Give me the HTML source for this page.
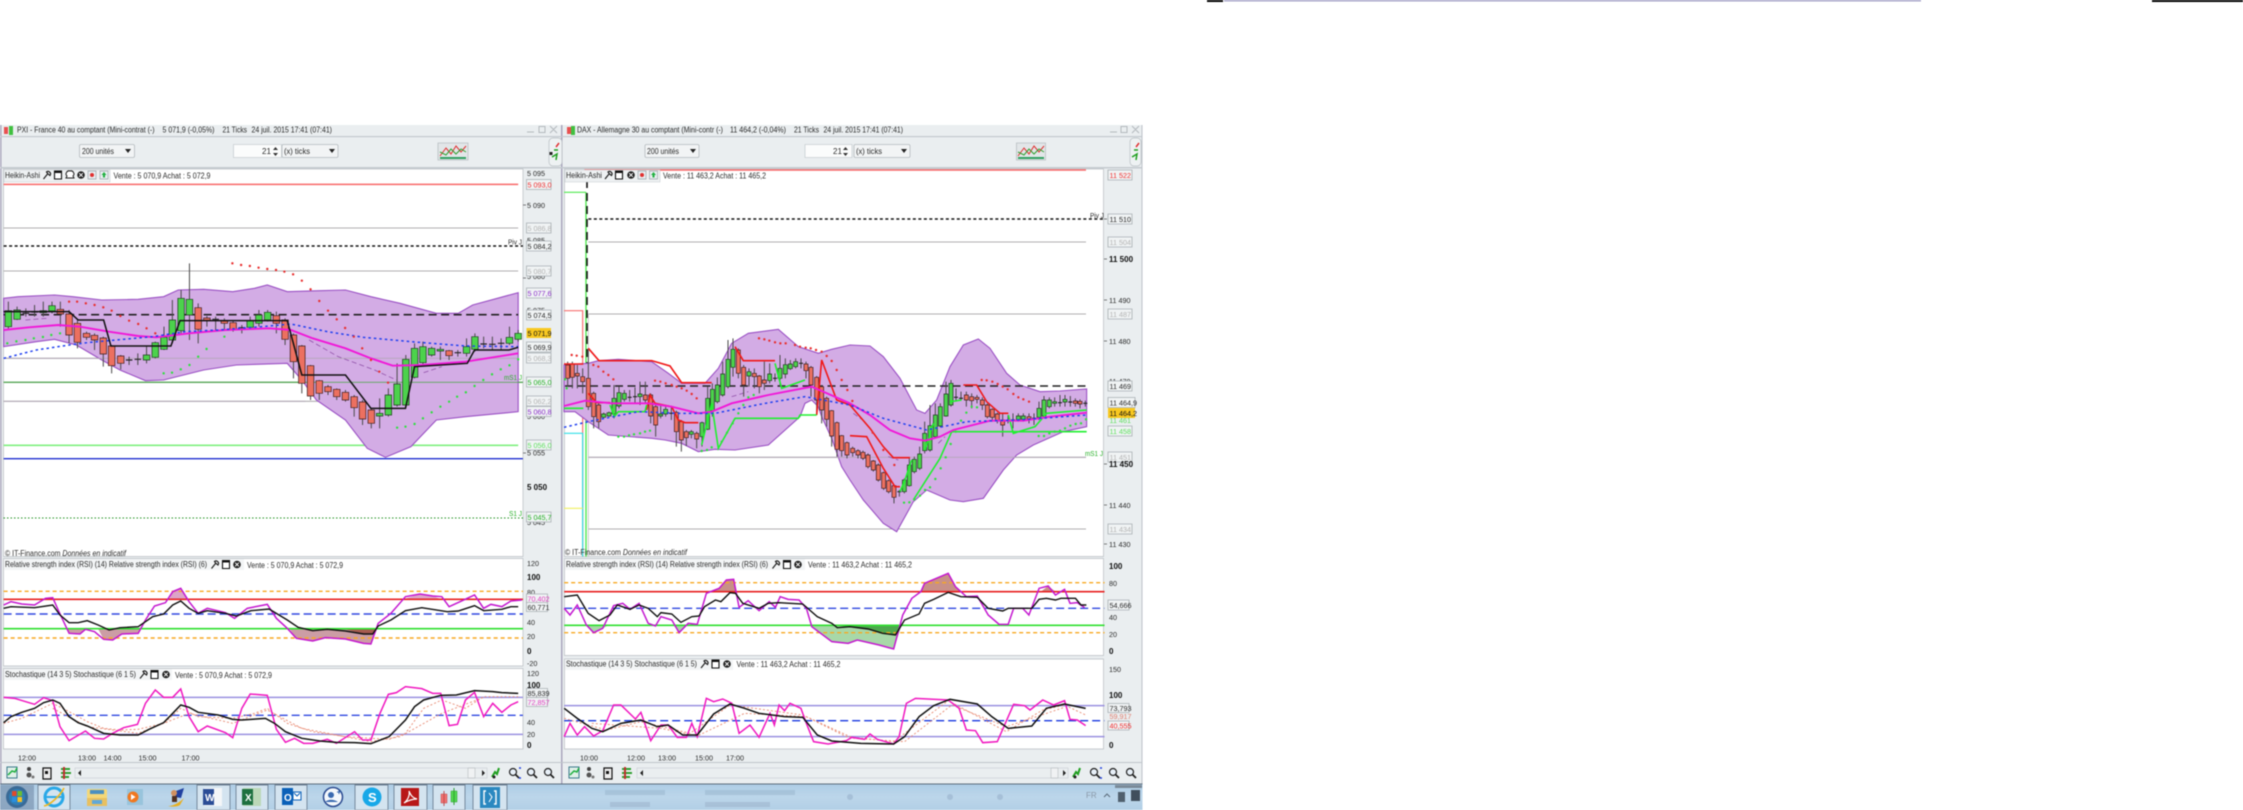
<!DOCTYPE html>
<html><head><meta charset="utf-8"><title>Charts</title>
<style>
html,body{margin:0;padding:0;background:#fff;width:2243px;height:810px;overflow:hidden}
svg{display:block;position:absolute;left:0;top:0;filter:blur(.45px)}
svg path,svg line,svg rect,svg circle,svg polygon{vector-effect:non-scaling-stroke}
text{font-family:"Liberation Sans",sans-serif;font-size:8px;fill:#2c2c2c}
.ax text{font-size:7.2px}
.ax .b{font-weight:bold;fill:#111;font-size:8px}
.g{fill:#b4b4b4}.r{fill:#f03030}.p{fill:#8a2fc8}.gr{fill:#28b028}.lg{fill:#60e060}.m{fill:#e040c0}
.box{fill:#f0f3f4;stroke:#a8aeb2;stroke-width:.8}
.n{fill:none}
</style></head><body>
<svg width="2243" height="810" viewBox="0 0 2243 810" xmlns="http://www.w3.org/2000/svg">
<defs>
<g id="wr"><path d="M-3 4L1-1M0-3a2.5 2.5 0 0 1 3.500 3.500L1.500-1Z" fill="none" stroke="#222" stroke-width="1.200"/></g>
<g id="wn"><rect x="-3.500" y="-4" width="7" height="8" fill="#fff" stroke="#111" stroke-width="1.100"/><rect x="-3.500" y="-4" width="7" height="2" fill="#111"/></g>
<g id="xc"><circle r="3.800" fill="#222"/><path d="M-1.800-1.800L1.800 1.800M1.800-1.800L-1.800 1.800" stroke="#fff" stroke-width="1"/></g>
<g id="ch"><rect x="-4" y="-4" width="8" height="8" fill="#e8eef0" stroke="#9aa4aa" stroke-width=".7"/><circle r="2" fill="#e03030"/></g>
<g id="cg"><rect x="-4" y="-4" width="8" height="8" fill="#e8eef0" stroke="#9aa4aa" stroke-width=".7"/><path d="M-2.500 0L0-3 2.500 0H1V2.500H-1V0Z" fill="#20b040"/></g>
<g id="srch"><circle cx="-1" cy="-1" r="3.500" fill="#e8f0f8" stroke="#222" stroke-width="1.200"/><path d="M1.500 1.500L5 5" stroke="#222" stroke-width="1.800"/></g>
</defs>

<!-- top strip -->
<rect x="1207" y="0" width="16" height="2" fill="#000"/>
<rect x="1224" y="0" width="697" height="1.500" fill="#a7a4c9"/>
<rect x="2152" y="0" width="91" height="2" fill="#000"/>

<!-- window backgrounds -->
<rect x="0" y="125" width="562" height="660" fill="#eaeef0"/>
<rect x="562.500" y="125" width="580" height="660" fill="#eaeef0"/>
<rect x="0" y="125" width="1.500" height="660" fill="#a9a6bd"/>
<rect x="561" y="125" width="1.500" height="660" fill="#a9a6bd"/>
<rect x="1141.500" y="125" width="1" height="660" fill="#bcc2c8"/>
<rect x="0" y="136" width="1142" height="1.200" fill="#c4cacf"/>
<rect x="0" y="167" width="1142" height="1.500" fill="#c4cacf"/>

<!-- panels chart 1 -->
<rect x="3.500" y="169" width="519.500" height="387.500" fill="#fff" stroke="#b8bdc1" stroke-width=".7"/>
<rect x="3.500" y="558.500" width="519.500" height="107.500" fill="#fff" stroke="#b8bdc1" stroke-width=".7"/>
<rect x="3.500" y="668.500" width="519.500" height="80.500" fill="#fff" stroke="#b8bdc1" stroke-width=".7"/>
<!-- panels chart 2 -->
<rect x="564.500" y="169" width="539" height="387.500" fill="#fff" stroke="#b8bdc1" stroke-width=".7"/>
<rect x="564.500" y="558.500" width="539" height="97" fill="#fff" stroke="#b8bdc1" stroke-width=".7"/>
<rect x="564.500" y="659" width="539" height="90" fill="#fff" stroke="#b8bdc1" stroke-width=".7"/>
<rect x="0" y="762" width="1142" height="1" fill="#bfc5ca"/>

<!-- chart 1 price -->
<g transform="translate(0,100) scale(.36364,.33333)">
<path d="M10 253H1425" stroke="#f86868" stroke-width="1.500" fill="none"/>
<path d="M10 384H1425M10 513H1425M10 775H1425M10 904H1425" stroke="#b0aeb0" stroke-width="1.100" fill="none"/>
<path d="M10 847H1438" stroke="#5aa85a" stroke-width="1.300" fill="none"/>
<path d="M10 1036H1425" stroke="#80f080" stroke-width="1.600" fill="none"/>
<path d="M10 1076H1438" stroke="#2030d0" stroke-width="1.400" fill="none"/>
<path d="M10 438H1438" stroke="#111" stroke-width="1.500" stroke-dasharray="3 2.500" fill="none"/>
<path d="M10 595L50 590 150 585 200 590 280 600 380 598 450 590 490 570 560 568 640 575 700 565 735 555 790 575 880 572 950 570 1020 590 1100 610 1200 640 1260 640 1300 615 1425 578V935L1280 950 1200 960 1130 1040 1060 1072 1010 1045 950 960 870 900 830 840 790 790 650 795 560 810 450 840 400 842 330 810 280 780 210 735 150 718 100 725 10 740Z" fill="#d3ace5" stroke="#9a50c4" stroke-width="1.100"/>
<path d="M10 644H1425" stroke="#222" stroke-width="1.600" stroke-dasharray="8 4.500" fill="none"/>
<path d="M10 775H1425M10 904H840" stroke="#b4a8b8" stroke-width=".8" fill="none"/>
<path d="M10 847H1438" stroke="#5aa85a" stroke-width=".9" fill="none"/>
<path d="M850 720L930 770 1030 810 1090 840M1165 818L1215 800M70 660L130 655" stroke="#9050a8" stroke-width=".8" stroke-dasharray="5 3" fill="none"/>
<!-- wicks -->
<path d="M23 605V690M47 620V660M71 625V650M95 615V650M119 605V650M143 605V640M166 605V680M190 630V730M213 660V745M238 695V720M260 700V750M284 710V800M307 735V820M332 765V808M355 770V795M379 760V795M403 740V790M427 725V775M451 680V750M474 600V730M498 570V700M521 490V720M545 610V730M569 648V680M593 650V690M617 655V690M641 660V695M665 675V700M688 650V690M712 630V680M736 630V665M760 635V700M784 655V735M807 700V835M830 735V880M854 795V900M878 840V900M902 855V885M926 865V900M950 870V905M974 885V950M997 900V975M1021 925V985M1044 895V985M1068 865V950M1092 790V920M1116 765V920M1140 730V835M1163 725V795M1187 740V770M1211 740V780M1235 750V780M1259 750V770M1283 715V770M1306 700V755M1330 710V745M1354 710V750M1378 715V750M1401 680V735M1425 690V725" stroke="#4a4a4a" stroke-width="1" fill="none"/>
<path d="M14 632h18v48h-18zM38 630h18v28h-18zM110 632h18v6h-18zM134 617h18v16h-18zM394 765h18v15h-18zM418 728h18v44h-18zM442 712h18v36h-18zM465 660h18v60h-18zM489 595h18v97h-18zM512 598h18v47h-18zM679 662h18v20h-18zM703 645h18v25h-18zM727 637h18v23h-18zM1035 940h18v8h-18zM1059 885h18v60h-18zM1083 852h18v63h-18zM1107 778h18v137h-18zM1131 745h18v87h-18zM1154 740h18v48h-18zM1178 745h18v20h-18zM1202 748h18v5h-18zM1274 740h18v20h-18zM1297 710h18v38h-18zM1392 712h18v18h-18zM1416 700h18v18h-18z" fill="#4cd24c" stroke="#1c3c1c" stroke-width=".7"/>
<path d="M157 628h18v14h-18zM181 642h18v63h-18zM204 670h18v57h-18zM229 700h18v12h-18zM251 706h18v14h-18zM275 714h18v48h-18zM298 738h18v59h-18zM323 768h18v22h-18zM536 623h18v65h-18zM560 654h18v8h-18zM608 663h18v7h-18zM632 668h18v22h-18zM751 647h18v23h-18zM775 660h18v58h-18zM798 705h18v80h-18zM821 738h18v112h-18zM845 797h18v91h-18zM869 842h18v38h-18zM893 860h18v15h-18zM917 868h18v22h-18zM941 877h18v23h-18zM965 890h18v33h-18zM988 906h18v51h-18zM1012 930h18v40h-18zM1226 752h18v15h-18z" fill="#ec7060" stroke="#3c1c1c" stroke-width=".7"/>
<path d="M62 640h18M86 636h18M346 780h18M370 778h18M584 658h18M656 683h18M1250 758h18M1321 732h18M1345 733h18M1369 730h18" stroke="#222" stroke-width="1.200" fill="none"/>
<!-- lines -->
<path d="M10 690L80 682 160 675 220 680 300 695 380 708 430 712 520 700 620 690 740 685 800 690 860 715 950 745 1020 775 1080 797 1160 795 1280 785 1425 760" stroke="#f018d8" stroke-width="1.900" fill="none"/>
<path d="M10 775L100 750 190 735 240 728 320 720 420 710 510 695 600 690 720 680 800 672 900 695 1000 712 1130 725 1280 738 1425 740" stroke="#2040f0" stroke-width="1.500" stroke-dasharray="2.500 3" fill="none"/>
<path d="M10 635H190L215 660H285L305 738H470L495 662H790L830 825H950L1020 925H1115L1140 800 1285 790 1305 750H1400L1425 742" stroke="#111" stroke-width="1.500" fill="none"/>
<path d="M190 605h.1M212 605h.1M236 610h.1M260 615h.1M284 622h.1M307 632h.1M331 648h.1M355 662h.1M380 672h.1M403 685h.1M427 700h.1M639 490h.1M663 495h.1M687 498h.1M711 503h.1M735 507h.1M759 510h.1M782 515h.1M806 523h.1M830 542h.1M854 568h.1M878 603h.1M902 632h.1M926 658h.1M949 684h.1M973 710h.1M996 745h.1M1020 780h.1M1043 815h.1M1067 848h.1" stroke="#e83030" stroke-width="2.400" stroke-linecap="round" fill="none"/>
<path d="M20 730h.1M45 724h.1M70 720h.1M93 715h.1M118 711h.1M141 705h.1M165 700h.1M450 820h.1M473 818h.1M497 808h.1M521 795h.1M545 770h.1M568 747h.1M617 710h.1M1092 983h.1M1115 980h.1M1140 972h.1M1163 955h.1M1187 937h.1M1211 920h.1M1235 905h.1M1257 890h.1M1281 877h.1M1305 858h.1M1329 840h.1M1353 823h.1M1377 808h.1M1401 796h.1M1425 778h.1" stroke="#30e040" stroke-width="2.400" stroke-linecap="round" fill="none"/>
</g>
<path d="M3.500 518H523" stroke="#209020" stroke-width="1" stroke-dasharray="1.500 2" fill="none"/>

<!-- chart 1 RSI + Stoch -->
<g transform="translate(0,460) scale(.36364,.33333)">
<path d="M465 418L475 395 497 385 515 418ZM1115 415L1155 402 1190 408 1215 418Z" fill="#dca4c8"/>
<path d="M185 507L190 520 220 522 235 508ZM270 507L285 538 310 540 335 522 380 520 385 507ZM795 505L815 535 860 543 895 533 950 537 1000 550 1020 552 1035 507Z" fill="#cc9da5"/>
<path d="M950 508L1000 522 1025 522 1035 508Z" fill="#a85a50"/>
<path d="M10 394H1438M10 534H1438" stroke="#f8a820" stroke-width="1.400" stroke-dasharray="4 3" fill="none"/>
<path d="M10 418H1438" stroke="#e82020" stroke-width="1.600" fill="none"/>
<path d="M10 462H1438" stroke="#3048e0" stroke-width="1.400" stroke-dasharray="8 4" fill="none"/>
<path d="M10 506H1438" stroke="#30e030" stroke-width="1.600" fill="none"/>
<path d="M10 435L30 425 60 432 95 435 125 415 145 413 160 450 190 520 220 522 235 508 260 515 285 538 310 540 335 522 380 520 400 480 425 438 455 428 475 395 497 385 520 425 545 460 570 445 620 458 645 475 680 445 735 433 760 475 790 505 815 535 860 543 895 533 950 537 1000 550 1020 552 1040 490 1075 460 1115 410 1155 402 1190 408 1215 410 1235 440 1265 425 1305 405 1330 445 1350 433 1380 440 1405 423 1435 420" stroke="#c418d0" stroke-width="1.500" fill="none"/>
<path d="M10 445L30 440 95 443 145 435 165 465 190 488 215 488 240 482 270 495 300 510 330 503 380 500 420 470 450 462 475 435 497 423 520 445 545 460 570 452 620 460 650 468 690 452 740 447 790 480 820 502 860 512 900 508 950 513 1000 522 1025 522 1040 498 1075 480 1115 452 1160 443 1230 455 1260 453 1305 437 1330 452 1380 448 1405 440 1425 440" stroke="#111" stroke-width="1.400" fill="none"/>
<path d="M10 712H1438M10 823H1438" stroke="#9a90e0" stroke-width="1.500" fill="none"/>
<path d="M10 766H1438" stroke="#3048e0" stroke-width="1.400" stroke-dasharray="8 4" fill="none"/>
<path d="M10 790L60 775 145 730 190 755 240 785 285 805 330 810 380 808 450 790 497 745 545 770 640 775 700 760 735 745 790 790 860 815 950 830 1020 835 1070 838 1115 820 1165 745 1215 720 1280 745 1330 710 1425 710M145 745L240 800 380 820 520 760 640 790 735 750 830 805 1020 845 1100 830 1215 760 1330 712" stroke="#e88870" stroke-width=".9" stroke-dasharray="2 2" fill="none"/>
<path d="M10 712L40 715 95 733 120 713 145 722 165 800 190 842 235 813 260 835 285 837 310 820 340 803 378 793 400 730 427 690 450 712 475 712 497 687 520 770 545 815 570 798 620 818 640 833 665 745 688 702 735 706 760 808 785 847 810 835 835 850 860 850 900 838 925 850 975 815 997 840 1020 840 1045 760 1068 703 1090 698 1115 680 1160 686 1190 700 1212 700 1235 797 1258 793 1280 720 1305 697 1330 770 1355 730 1380 757 1405 735 1425 725" stroke="#f018c0" stroke-width="1.500" fill="none"/>
<path d="M10 788L30 770 60 757 95 745 120 728 145 720 165 730 190 770 215 788 240 798 285 820 330 825 380 825 410 808 450 788 475 760 497 735 520 742 545 757 600 765 640 778 665 780 730 775 755 790 785 815 830 835 880 843 925 847 975 848 1020 851 1070 830 1115 780 1140 740 1165 720 1212 706 1255 705 1305 692 1355 695 1380 698 1425 700" stroke="#111" stroke-width="1.500" fill="none"/>
</g>

<!-- chart 2 price: origin 555,290, 3x -->
<g transform="translate(555,290) scale(.33333)">
<path d="M88 -360H1593" stroke="#f86868" stroke-width="1.600" fill="none"/>
<path d="M100 -144H1593M100 72H1593M100 502H1593M100 717H1593" stroke="#b0aeb0" stroke-width="1.100" fill="none"/>
<path d="M93 -293V800" stroke="#50e850" stroke-width="1.400" fill="none"/>
<path d="M27 -293H93" stroke="#50e850" stroke-width="1.200" fill="none"/>
<path d="M27 62H83V800" stroke="#f87070" stroke-width="1.200" fill="none"/>
<path d="M27 430H83V800" stroke="#30e0e8" stroke-width="1.200" fill="none"/>
<path d="M27 655H83" stroke="#f0f060" stroke-width="1.200" fill="none"/>
<path d="M100 72V800" stroke="#c0c0c0" stroke-width=".8" fill="none"/>
<path d="M96 -330V360" stroke="#111" stroke-width="1.600" stroke-dasharray="8 5" fill="none"/>
<path d="M100 -213H1648" stroke="#111" stroke-width="1.500" stroke-dasharray="3 2.500" fill="none"/>
<path d="M27 225L100 220 130 212 190 208 290 215 340 250 380 280 450 280 490 235 530 160 580 130 670 118 730 170 790 190 830 178 885 165 945 168 985 200 1035 265 1085 360 1110 370 1145 330 1185 230 1225 165 1270 147 1305 175 1355 250 1395 285 1455 305 1515 303 1595 297V410L1525 425 1435 465 1385 495 1345 540 1285 625 1225 635 1185 630 1115 600 1075 635 1025 725 985 700 925 630 885 570 860 530 830 445 800 380 790 350 770 330 750 340 735 380 640 465 540 480 480 478 430 485 380 460 330 450 290 445 160 435 130 415 100 395 60 365 27 365Z" fill="#d3ace5" stroke="#9a50c4" stroke-width="1.100"/>
<path d="M30 288H1593" stroke="#222" stroke-width="1.600" stroke-dasharray="8 4.500" fill="none"/>
<path d="M100 502H1593" stroke="#b4a8b8" stroke-width=".8" fill="none"/>
<path d="M895 370L930 395M1000 500L1030 510M530 320L580 305M1150 460L1170 440" stroke="#9050a8" stroke-width=".8" stroke-dasharray="5 3" fill="none"/>
<!-- wicks -->
<path d="M38 215V290M52 215V295M67 225V295M83 235V310M100 175V360M116 305V415M131 340V415M146 368V385M162 365V380M177 285V385M192 290V355M208 300V335M224 300V335M240 292V340M255 275V345M271 275V340M287 310V400M302 345V440M317 345V385M332 350V380M349 350V390M364 362V470M379 390V485M394 420V468M409 420V445M425 425V475M441 395V470M458 290V420M472 280V380M487 262V340M503 215V320M519 150V295M534 145V260M550 175V265M566 225V320M582 235V290M598 235V295M613 255V310M628 215V300M644 220V280M660 250V275M675 195V285M691 205V265M706 210V240M722 205V235M738 205V235M753 215V265M768 228V320M785 258V375M800 285V400M815 320V410M830 360V470M846 395V500M860 435V500M876 455V505M893 470V500M909 478V505M924 482V510M939 490V535M955 510V545M970 520V575M986 545V600M1001 568V610M1017 585V640M1033 600V620M1048 565V610M1063 505V590M1078 500V550M1094 470V540M1109 395V490M1125 345V485M1141 340V445M1156 340V412M1173 275V380M1188 270V350M1203 295V335M1218 305V330M1234 305V350M1250 310V355M1266 315V340M1282 322V360M1297 340V385M1312 355V395M1327 368V400M1343 370V440M1359 375V400M1374 370V415M1390 370V395M1405 370V395M1422 370V400M1437 370V405M1452 335V390M1467 318V385M1483 322V355M1499 322V350M1515 315V350M1530 315V350M1546 318V350M1561 325V350M1575 328V355M1591 332V350" stroke="#4a4a4a" stroke-width="1" fill="none"/>
<path d="M140 372h12v10h-12zM156 368h12v10h-12zM171 325h12v47h-12zM186 308h12v40h-12zM202 310h12v18h-12zM249 312h12v8h-12zM311 372h12v6h-12zM326 358h12v14h-12zM403 425h12v8h-12zM435 398h12v42h-12zM452 325h12v93h-12zM466 298h12v64h-12zM481 285h12v50h-12zM497 252h12v63h-12zM513 208h12v82h-12zM528 178h12v54h-12zM576 245h12v13h-12zM638 252h12v20h-12zM669 235h12v30h-12zM685 224h12v28h-12zM700 222h12v14h-12zM716 215h12v15h-12zM1042 570h12v35h-12zM1057 525h12v62h-12zM1072 508h12v37h-12zM1088 492h12v43h-12zM1103 430h12v52h-12zM1119 407h12v73h-12zM1135 375h12v65h-12zM1150 350h12v58h-12zM1167 312h12v66h-12zM1182 280h12v65h-12zM1384 378h12v12h-12zM1399 378h12v10h-12zM1446 355h12v27h-12zM1461 330h12v48h-12zM1477 330h12v20h-12zM1493 335h12v5h-12zM1524 328h12v8h-12z" fill="#4cd24c" stroke="#1c3c1c" stroke-width=".7"/>
<path d="M32 225h12v40h-12zM46 222h12v40h-12zM61 250h12v8h-12zM77 260h12v15h-12zM94 265h12v85h-12zM110 310h12v70h-12zM125 345h12v50h-12zM265 315h12v15h-12zM281 315h12v63h-12zM296 350h12v55h-12zM358 367h12v58h-12zM373 395h12v55h-12zM388 425h12v18h-12zM419 430h12v17h-12zM544 180h12v70h-12zM560 232h12v53h-12zM592 250h12v10h-12zM607 258h12v32h-12zM622 270h12v10h-12zM747 222h12v20h-12zM762 232h12v53h-12zM779 262h12v68h-12zM794 290h12v70h-12zM809 325h12v63h-12zM824 362h12v76h-12zM840 398h12v80h-12zM854 437h12v45h-12zM870 458h12v37h-12zM887 475h12v13h-12zM903 482h12v13h-12zM918 487h12v18h-12zM933 495h12v35h-12zM949 513h12v27h-12zM964 525h12v45h-12zM980 548h12v47h-12zM995 572h12v33h-12zM1011 587h12v35h-12zM1228 315h12v15h-12zM1244 320h12v12h-12zM1260 322h12v6h-12zM1276 330h12v15h-12zM1291 345h12v35h-12zM1306 358h12v24h-12zM1321 372h12v20h-12zM1337 390h12v15h-12zM1416 380h12v8h-12zM1555 333h12v7h-12zM1569 334h12v8h-12z" fill="#ec7060" stroke="#3c1c1c" stroke-width=".7"/>
<path d="M218 322h12M234 320h12M343 370h12M654 265h12M732 220h12M1027 605h12M1197 322h12M1212 325h12M1353 392h12M1368 390h12M1431 385h12M1509 338h12M1540 336h12M1585 340h12" stroke="#222" stroke-width="1.200" fill="none"/>
<!-- red -->
<path d="M27 222H85M100 175L132 212H290L345 228 380 278H470M100 310L125 338H165M275 360L285 315 300 340 350 350 370 390 390 398H430M540 170L565 212H660M785 375L800 210 845 330 885 345 945 415 985 470 1015 503H1065M885 437L935 440 985 535 1020 590H1035M1225 285H1265L1295 335 1335 370H1360" stroke="#f01818" stroke-width="1.600" fill="none"/>
<!-- green -->
<path d="M27 355H85M165 345L178 380 190 365H270L275 345M440 465L470 340 490 475 540 385H730L735 375H785M660 220L680 295 750 270M1075 630L1155 505 1190 425H1595M1035 605L1050 570 1070 510M1110 480L1135 400M1185 335L1220 330M1360 375L1375 430 1440 410 1475 370 1595 360" stroke="#20f030" stroke-width="1.600" fill="none"/>
<!-- magenta -->
<path d="M27 348L90 332 170 340 280 340 350 350 430 370 470 365 530 340 640 315 770 290 885 340 945 375 1005 420 1065 445 1110 452 1155 440 1195 420 1305 392 1405 392 1485 380 1595 368" stroke="#f018d8" stroke-width="1.900" fill="none"/>
<path d="M27 412L100 395 250 365 370 370 480 370 630 340 750 320 885 345 985 385 1115 420 1235 395 1385 390 1595 375" stroke="#2040f0" stroke-width="1.500" stroke-dasharray="2.500 3" fill="none"/>
<path d="M50 195h.1M65 197h.1M82 200h.1M115 225h.1M130 230h.1M145 245h.1M160 255h.1M175 268h.1M300 272h.1M316 275h.1M332 280h.1M350 285h.1M365 290h.1M380 295h.1M395 302h.1M410 312h.1M425 325h.1M612 145h.1M628 148h.1M643 152h.1M660 157h.1M676 160h.1M692 160h.1M720 165h.1M735 170h.1M752 173h.1M767 175h.1M783 180h.1M800 185h.1M815 198h.1M830 213h.1M845 240h.1M860 270h.1M877 300h.1M892 333h.1M953 428h.1M985 480h.1M1018 525h.1M1280 270h.1M1295 271h.1M1312 275h.1M1328 282h.1M1343 290h.1M1358 298h.1M1375 312h.1M1390 322h.1M1405 328h.1M1422 335h.1" stroke="#e83030" stroke-width="2.400" stroke-linecap="round" fill="none"/>
<path d="M30 268h.1M35 295h.1M190 440h.1M207 440h.1M222 436h.1M237 433h.1M255 430h.1M270 425h.1M285 422h.1M440 483h.1M456 480h.1M470 472h.1M500 455h.1M516 428h.1M533 400h.1M550 370h.1M565 345h.1M580 322h.1M596 315h.1M1047 638h.1M1063 637h.1M1078 628h.1M1095 617h.1M1110 600h.1M1125 592h.1M1141 567h.1M1157 535h.1M1172 502h.1M1187 462h.1M1202 425h.1M1218 392h.1M1234 368h.1M1250 350h.1M1266 352h.1M1451 438h.1M1467 438h.1M1483 430h.1M1499 425h.1M1515 422h.1M1530 415h.1M1546 407h.1M1562 402h.1M1578 400h.1M1593 388h.1" stroke="#30e040" stroke-width="2.400" stroke-linecap="round" fill="none"/>
</g>

<!-- chart 2 RSI + Stoch -->
<g transform="translate(570,460) scale(.36364,.33333)">
<path d="M660 496L680 515 720 545 765 550 790 540 850 555 890 567 912 496ZM45 496L65 518 90 505 105 496ZM285 496L300 518 320 496Z" fill="#a8d8a8"/>
<path d="M735 497H910L895 525 860 520 820 507Z" fill="#4da84d"/>
<path d="M380 395L410 385 430 360 450 358 458 395ZM965 395L975 370 1040 340 1060 380 1075 395ZM1295 395L1315 378 1335 395Z" fill="#c89088"/>
<path d="M-16 368H1470M-16 518H1470" stroke="#f8a820" stroke-width="1.400" stroke-dasharray="4 3" fill="none"/>
<path d="M-16 395H1470" stroke="#e82020" stroke-width="1.600" fill="none"/>
<path d="M-16 445H1470" stroke="#3048e0" stroke-width="1.400" stroke-dasharray="8 4" fill="none"/>
<path d="M-16 496H1470" stroke="#30e030" stroke-width="1.600" fill="none"/>
<path d="M-16 445L0 465 20 435 45 495 65 518 90 505 120 437 145 430 165 448 190 430 215 490 235 498 250 470 280 480 300 518 325 490 350 493 375 400 410 385 430 360 450 358 465 442 490 422 520 452 548 425 565 442 578 410 600 418 630 420 650 445 665 500 720 545 765 550 790 540 850 555 890 567 915 465 940 415 965 395 975 370 1040 340 1060 380 1090 410 1120 408 1150 465 1180 493 1205 493 1220 445 1245 445 1262 465 1290 385 1315 378 1335 405 1360 388 1375 430 1395 428 1415 443" stroke="#c418d0" stroke-width="1.500" fill="none"/>
<path d="M-16 410L20 405 50 460 80 482 110 465 130 435 165 448 190 435 215 445 240 470 250 458 280 462 305 487 335 470 355 468 370 440 400 420 415 425 440 398 455 400 475 430 520 445 545 430 575 428 640 432 680 470 720 490 735 503 770 500 820 507 860 520 895 525 920 480 960 462 975 430 1000 418 1040 397 1075 410 1120 412 1150 445 1190 453 1205 445 1270 445 1290 418 1310 415 1335 420 1350 415 1390 415 1405 435 1420 435" stroke="#111" stroke-width="1.400" fill="none"/>
<path d="M-16 737H1470M-16 830H1470" stroke="#9a90e0" stroke-width="1.500" fill="none"/>
<path d="M-16 782H1470" stroke="#1838e0" stroke-width="1.400" stroke-dasharray="8 4" fill="none"/>
<path d="M-16 775L100 810 195 785 330 820 440 735 640 765 760 830 890 845 1040 722 1200 815 1300 750 1360 735 1418 765M60 790L250 805 350 828 480 760 650 770 780 835 920 845 1050 735 1200 800 1360 742" stroke="#e88870" stroke-width=".9" stroke-dasharray="2 2" fill="none"/>
<path d="M-16 830L0 790 20 825 40 800 65 828 90 812 120 735 140 735 180 777 195 757 222 842 250 795 270 795 295 832 320 832 335 790 350 830 375 715 395 725 420 717 445 730 465 820 495 795 520 832 550 760 562 795 575 735 590 752 605 730 635 745 650 790 670 845 710 852 760 842 775 832 810 838 825 822 845 838 890 852 905 830 925 730 950 715 1040 720 1070 745 1090 810 1115 812 1135 848 1175 845 1220 733 1250 737 1265 750 1300 720 1330 735 1360 722 1375 778 1395 780 1418 797" stroke="#f018c0" stroke-width="1.500" fill="none"/>
<path d="M-16 745L20 775 60 805 90 815 140 790 195 780 240 800 270 795 310 825 350 825 395 762 440 732 480 745 520 760 590 770 640 772 680 825 720 843 800 850 890 852 920 830 960 770 1000 737 1045 718 1120 732 1160 770 1205 805 1270 798 1310 745 1360 732 1418 745" stroke="#111" stroke-width="1.500" fill="none"/>
</g>

<!-- Title bars -->
<rect x="4" y="127" width="4" height="7" fill="#e85050"/><rect x="9" y="126" width="4" height="9" fill="#40c040"/>
<text x="17" y="132.500" textLength="137.500" lengthAdjust="spacingAndGlyphs">PXI - France 40 au comptant (Mini-contrat (-)</text>
<text x="162.500" y="132.500" textLength="52" lengthAdjust="spacingAndGlyphs">5 071,9 (-0,05%)</text>
<text x="222.500" y="132.500" textLength="24.500" lengthAdjust="spacingAndGlyphs">21 Ticks</text>
<text x="251.500" y="132.500" textLength="80.500" lengthAdjust="spacingAndGlyphs">24 juil. 2015 17:41 (07:41)</text>
<rect x="567" y="127" width="4" height="7" fill="#e85050"/><rect x="571" y="126" width="4" height="9" fill="#40c040"/>
<text x="577" y="132.500" textLength="146" lengthAdjust="spacingAndGlyphs">DAX - Allemagne 30 au comptant (Mini-contr (-)</text>
<text x="730" y="132.500" textLength="56" lengthAdjust="spacingAndGlyphs">11 464,2 (-0,04%)</text>
<text x="794" y="132.500" textLength="25" lengthAdjust="spacingAndGlyphs">21 Ticks</text>
<text x="823.500" y="132.500" textLength="79.500" lengthAdjust="spacingAndGlyphs">24 juil. 2015 17:41 (07:41)</text>
<path d="M527 132h7M539 126.500h6v6h-6zM550 126l7 7m0-7l-7 7M1110 132h7M1121 126.500h6v6h-6zM1132 126l7 7m0-7l-7 7" stroke="#b4b9bd" stroke-width="1" fill="none"/>

<!-- Toolbars chart 1 -->
<rect x="79.500" y="144.500" width="55" height="13" rx="1.500" fill="#f2f4f5" stroke="#b4babe" stroke-width=".8"/>
<text x="82" y="154" textLength="32" lengthAdjust="spacingAndGlyphs">200 unités</text><path d="M125 149h6l-3 4z" fill="#222"/>
<rect x="233.500" y="144.500" width="48" height="13" fill="#fbfcfc" stroke="#c8ced2" stroke-width=".8"/>
<text x="262" y="154">21</text><path d="M273 150l2.500-3 2.500 3zM273 153l2.500 3 2.500-3z" fill="#333"/>
<rect x="282" y="144.500" width="56" height="13" rx="1.500" fill="#f2f4f5" stroke="#b4babe" stroke-width=".8"/>
<text x="284" y="154" textLength="26" lengthAdjust="spacingAndGlyphs">(x) ticks</text><path d="M329 149h6l-3 4z" fill="#222"/>
<rect x="438" y="143" width="30" height="17" fill="#e2e6e8" stroke="#b8bec2" stroke-width=".8"/>
<path d="M440 156l6-8 5 6 5-8 5 6 5-6" stroke="#e03030" fill="none" stroke-width="1"/><path d="M440 152l6 3 5-6 5 5 5-5 5 3" stroke="#30a030" fill="none" stroke-width="1"/><rect x="440" y="157" width="26" height="2" fill="#30a060"/>
<rect x="549" y="138" width="13" height="28" rx="4" fill="#eef2f3" stroke="#b8bec2" stroke-width=".7"/>
<path d="M554 150h4M552 157l5-3-1 6" stroke="#20a020" stroke-width="1.500" fill="none"/><path d="M556 147l3-4" stroke="#e03030" stroke-width="1.500"/><rect x="549.500" y="152" width="3" height="3" fill="#222"/>

<!-- Toolbars chart 2 -->
<rect x="645" y="144.500" width="54" height="13" rx="1.500" fill="#f2f4f5" stroke="#b4babe" stroke-width=".8"/>
<text x="647" y="154" textLength="32" lengthAdjust="spacingAndGlyphs">200 unités</text><path d="M690 149h6l-3 4z" fill="#222"/>
<rect x="805" y="144.500" width="47" height="13" fill="#fbfcfc" stroke="#c8ced2" stroke-width=".8"/>
<text x="833" y="154">21</text><path d="M843 150l2.500-3 2.500 3zM843 153l2.500 3 2.500-3z" fill="#333"/>
<rect x="854" y="144.500" width="56" height="13" rx="1.500" fill="#f2f4f5" stroke="#b4babe" stroke-width=".8"/>
<text x="856" y="154" textLength="26" lengthAdjust="spacingAndGlyphs">(x) ticks</text><path d="M901 149h6l-3 4z" fill="#222"/>
<rect x="1016.500" y="143" width="29" height="17" fill="#e2e6e8" stroke="#b8bec2" stroke-width=".8"/>
<path d="M1018 156l6-8 5 6 5-8 5 6 5-6" stroke="#e03030" fill="none" stroke-width="1"/><path d="M1018 152l6 3 5-6 5 5 5-5 5 3" stroke="#30a030" fill="none" stroke-width="1"/><rect x="1018" y="157" width="26" height="2" fill="#30a060"/>
<rect x="1130" y="138" width="11" height="28" rx="4" fill="#eef2f3" stroke="#b8bec2" stroke-width=".7"/>
<path d="M1134 150h4M1132 157l5-3-1 6" stroke="#20a020" stroke-width="1.500" fill="none"/><path d="M1136 147l3-4" stroke="#e03030" stroke-width="1.500"/>

<!-- Panel headers chart 1 -->
<rect x="4" y="170" width="106" height="12" fill="#eef1f2" stroke="#c8ced2" stroke-width=".6"/>
<text x="5" y="178" textLength="35" lengthAdjust="spacingAndGlyphs">Heikin-Ashi</text>
<use href="#wr" x="46.500" y="175"/><use href="#wn" x="58" y="175"/><path d="M70 171a3 3 0 0 1 3 5l1 2h-8l1-2a3 3 0 0 1 3-5z" fill="#fff" stroke="#222"/><use href="#xc" x="81" y="175"/><use href="#ch" x="92" y="175"/><use href="#cg" x="104" y="175"/>
<text x="113.500" y="178.500" textLength="97" lengthAdjust="spacingAndGlyphs">Vente : 5 070,9 Achat : 5 072,9</text>
<rect x="4" y="559" width="240" height="11" fill="#eef1f2" opacity=".7"/>
<text x="5" y="567" textLength="202" lengthAdjust="spacingAndGlyphs">Relative strength index (RSI) (14) Relative strength index (RSI) (6)</text>
<use href="#wr" x="214.500" y="564.500"/><use href="#wn" x="226" y="564.500"/><use href="#xc" x="237" y="564.500"/>
<text x="247" y="568" textLength="96" lengthAdjust="spacingAndGlyphs">Vente : 5 070,9 Achat : 5 072,9</text>
<rect x="4" y="669" width="168" height="11" fill="#eef1f2" opacity=".7"/>
<text x="5" y="677" textLength="131" lengthAdjust="spacingAndGlyphs">Stochastique (14 3 5) Stochastique (6 1 5)</text>
<use href="#wr" x="143" y="674.500"/><use href="#wn" x="154.500" y="674.500"/><use href="#xc" x="166" y="674.500"/>
<text x="175" y="678" textLength="97" lengthAdjust="spacingAndGlyphs">Vente : 5 070,9 Achat : 5 072,9</text>
<text x="5" y="556" textLength="121" lengthAdjust="spacingAndGlyphs">© IT-Finance.com  <tspan font-style="italic">Données en indicatif</tspan></text>

<!-- Panel headers chart 2 -->
<rect x="565" y="170" width="95" height="12" fill="#eef1f2" stroke="#c8ced2" stroke-width=".6"/>
<text x="566" y="178" textLength="36" lengthAdjust="spacingAndGlyphs">Heikin-Ashi</text>
<use href="#wr" x="608" y="175"/><use href="#wn" x="619" y="175"/><use href="#xc" x="631" y="175"/><use href="#ch" x="642" y="175"/><use href="#cg" x="653.500" y="175"/>
<text x="663" y="178.500" textLength="103" lengthAdjust="spacingAndGlyphs">Vente : 11 463,2 Achat : 11 465,2</text>
<rect x="565" y="559" width="240" height="11" fill="#eef1f2" opacity=".7"/>
<text x="566" y="567" textLength="202" lengthAdjust="spacingAndGlyphs">Relative strength index (RSI) (14) Relative strength index (RSI) (6)</text>
<use href="#wr" x="775.500" y="564.500"/><use href="#wn" x="787" y="564.500"/><use href="#xc" x="798" y="564.500"/>
<text x="808" y="567.500" textLength="104" lengthAdjust="spacingAndGlyphs">Vente : 11 463,2 Achat : 11 465,2</text>
<rect x="565" y="660" width="168" height="10" fill="#eef1f2" opacity=".7"/>
<text x="566" y="666.500" textLength="131" lengthAdjust="spacingAndGlyphs">Stochastique (14 3 5) Stochastique (6 1 5)</text>
<use href="#wr" x="704" y="664"/><use href="#wn" x="715.500" y="664"/><use href="#xc" x="727" y="664"/>
<text x="736.500" y="667" textLength="104" lengthAdjust="spacingAndGlyphs">Vente : 11 463,2 Achat : 11 465,2</text>
<text x="565" y="555" textLength="122" lengthAdjust="spacingAndGlyphs">© IT-Finance.com  <tspan font-style="italic">Données en indicatif</tspan></text>

<!-- Pivot labels -->
<g class="ax">
<text x="508" y="244.500" textLength="14" lengthAdjust="spacingAndGlyphs">Piv J</text>
<text x="504" y="380" class="gr" textLength="18" lengthAdjust="spacingAndGlyphs">mS1 J</text>
<text x="509" y="516" class="gr" textLength="13" lengthAdjust="spacingAndGlyphs">S1 J</text>
<text x="1090" y="218" textLength="14" lengthAdjust="spacingAndGlyphs">Piv J</text>
<text x="1085" y="456" class="gr" textLength="18" lengthAdjust="spacingAndGlyphs">mS1 J</text>
</g>

<!-- Axis chart 1 -->
<g class="ax">
<text x="527" y="176">5 095</text>
<rect class="box" x="526.500" y="179.500" width="24.500" height="10"/><text class="r" x="527.500" y="187.500">5 093,0</text>
<text x="527" y="208">5 090</text>
<rect class="box" x="526.500" y="223" width="24.500" height="10"/><text class="g" x="527.500" y="231">5 086,8</text>
<text x="527" y="243">5 085</text>
<rect class="box" x="526.500" y="241" width="24.500" height="10"/><text x="527.500" y="249">5 084,2</text>
<text x="527" y="279">5 080</text>
<rect class="box" x="526.500" y="266" width="24.500" height="10"/><text class="g" x="527.500" y="274">5 080,7</text>
<rect class="box" x="526.500" y="288" width="24.500" height="10"/><text class="p" x="527.500" y="296">5 077,6</text>
<text x="527" y="313">5 075</text>
<rect class="box" x="526.500" y="310" width="24.500" height="10"/><text x="527.500" y="318">5 074,5</text>
<rect x="526.500" y="328" width="24.500" height="10" fill="#f8c820"/><text x="527.500" y="336" style="fill:#111">5 071,9</text>
<rect class="box" x="526.500" y="342" width="24.500" height="10"/><text x="527.500" y="350">5 069,9</text>
<rect class="box" x="526.500" y="353" width="24.500" height="10"/><text class="g" x="527.500" y="361">5 068,3</text>
<rect class="box" x="526.500" y="377" width="24.500" height="10"/><text class="gr" x="527.500" y="385">5 065,0</text>
<rect class="box" x="526.500" y="396" width="24.500" height="10"/><text class="g" x="527.500" y="404">5 062,2</text>
<text x="527" y="419">5 060</text>
<rect class="box" x="526.500" y="406.500" width="24.500" height="10"/><text class="p" x="527.500" y="414.500">5 060,8</text>
<rect class="box" x="526.500" y="440" width="24.500" height="10"/><text class="lg" x="527.500" y="448">5 056,0</text>
<text x="527" y="455.500">5 055</text>
<text class="b" x="527" y="490">5 050</text>
<text x="527" y="525">5 045</text>
<rect class="box" x="526.500" y="512" width="24.500" height="10"/><text class="gr" x="527.500" y="520">5 045,7</text>
<text x="527" y="566">120</text><text class="b" x="527" y="580">100</text><text x="527" y="595">80</text>
<rect class="box" x="526.500" y="594" width="21" height="9"/><text class="m" x="527.500" y="601.500">70,402</text>
<rect class="box" x="526.500" y="602.500" width="21" height="9"/><text x="527.500" y="610">60,771</text>
<text x="527" y="625">40</text><text x="527" y="639">20</text><text class="b" x="527" y="654">0</text><text x="527" y="666">-20</text>
<text x="527" y="676">120</text><text class="b" x="527" y="688">100</text>
<rect class="box" x="526.500" y="688.500" width="21" height="9"/><text x="527.500" y="696">85,839</text>
<rect class="box" x="526.500" y="697.500" width="21" height="9"/><text class="m" x="527.500" y="705">72,857</text>
<text x="527" y="725">40</text><text x="527" y="737">20</text><text class="b" x="527" y="748">0</text>
<text x="18" y="760.500">12:00</text><text x="78" y="760.500">13:00</text><text x="103.500" y="760.500">14:00</text><text x="138.500" y="760.500">15:00</text><text x="181.500" y="760.500">17:00</text>
</g>

<!-- Axis chart 2 -->
<g class="ax">
<rect class="box" x="1108" y="170" width="24" height="10"/><text class="r" x="1109.500" y="178">11 522</text>
<rect class="box" x="1108" y="214" width="24" height="10"/><text x="1109.500" y="222">11 510</text>
<rect class="box" x="1108" y="237" width="24" height="10"/><text class="g" x="1109.500" y="245">11 504</text>
<text class="b" x="1109" y="262">11 500</text>
<text x="1109" y="303">11 490</text>
<rect class="box" x="1108" y="309" width="24" height="10"/><text class="g" x="1109.500" y="317">11 487</text>
<text x="1109" y="344">11 480</text>
<text x="1109" y="384">11 470</text>
<rect class="box" x="1108" y="381" width="24" height="10"/><text x="1109.500" y="389">11 469</text>
<rect class="box" x="1108" y="397.500" width="27" height="10"/><text x="1109.500" y="405.500">11 464,9</text>
<rect x="1108" y="408" width="27" height="10" fill="#f8c820"/><text x="1109.500" y="416" style="fill:#111">11 464,2</text>
<text class="lg" x="1109.500" y="423">11 461</text>
<rect class="box" x="1108" y="426" width="24" height="10"/><text class="lg" x="1109.500" y="434">11 458</text>
<rect class="box" x="1108" y="452" width="24" height="10"/><text class="g" x="1109.500" y="460">11 451</text>
<text class="b" x="1109" y="467">11 450</text>
<text x="1109" y="508">11 440</text>
<rect class="box" x="1108" y="524" width="24" height="10"/><text class="g" x="1109.500" y="532">11 434</text>
<text x="1109" y="547">11 430</text>
<text class="b" x="1109" y="569">100</text><text x="1109" y="586">80</text>
<rect class="box" x="1108" y="600" width="21" height="10"/><text x="1109.500" y="608">54,666</text>
<text x="1109" y="620">40</text><text x="1109" y="637">20</text><text class="b" x="1109" y="654">0</text>
<text x="1109" y="672">150</text><text class="b" x="1109" y="698">100</text>
<rect class="box" x="1108" y="703.500" width="21" height="9"/><text x="1109.500" y="711">73,793</text>
<text class="r" x="1109.500" y="719" style="fill:#e08070">59,917</text>
<rect class="box" x="1108" y="721" width="21" height="9"/><text class="r" x="1109.500" y="728.500">40,555</text>
<text class="b" x="1109" y="748">0</text>
<text x="580" y="760.500">10:00</text><text x="627" y="760.500">12:00</text><text x="658" y="760.500">13:00</text><text x="695" y="760.500">15:00</text><text x="726" y="760.500">17:00</text>
</g>
<path d="M523 205h3M523 278h3M523 453h3M1104 219h3M1104 259h3M1104 300h3M1104 341h3M1104 464h3M1104 505h3M1104 544h3" stroke="#555" stroke-width=".7"/>

<!-- bottom toolbars -->
<rect x="75" y="768" width="412" height="10" fill="#eaeef0" stroke="#cdd2d6" stroke-width=".7"/>
<rect x="637" y="768" width="431" height="10" fill="#eaeef0" stroke="#cdd2d6" stroke-width=".7"/>
<path d="M78 773l3-3v6zM485 773l-3-3v6zM640 773l3-3v6zM1066 773l-3-3v6z" fill="#222"/>
<rect x="468" y="768" width="7" height="10" fill="#f0f2f3" stroke="#aab0b4" stroke-width=".5"/>
<rect x="1051" y="768" width="7" height="10" fill="#f0f2f3" stroke="#aab0b4" stroke-width=".5"/>
<g>
<rect x="7" y="767" width="10" height="11" fill="#e0f0e8" stroke="#3a7a8a"/><path d="M8 775l4-4 3 1 2-4" stroke="#20b040" stroke-width="1.500" fill="none"/>
<circle cx="29" cy="769" r="2" fill="#444"/><circle cx="29" cy="775" r="2.500" fill="#555"/><circle cx="33" cy="777" r="1.500" fill="#777"/>
<rect x="43" y="768" width="8" height="11" fill="#eee" stroke="#111" stroke-width="1.200"/><rect x="45" y="771" width="3" height="3" fill="#111"/>
<path d="M61 769h9M61 773h10M61 777h8" stroke="#30a030" stroke-width="2"/><path d="M64 767v12" stroke="#c03030" stroke-width="2"/>
<path d="M492 777l3-5 2 2 2-6" stroke="#20a020" stroke-width="2" fill="none"/><circle cx="494" cy="777" r="1.500" fill="#222"/>
<use href="#srch" x="514" y="773"/><path d="M519 768h2M519 778h2" stroke="#2040e0" stroke-width="1.500"/>
<use href="#srch" x="532" y="773"/><use href="#srch" x="549" y="773"/>
<rect x="569" y="767" width="10" height="11" fill="#e0f0e8" stroke="#3a7a8a"/><path d="M570 775l4-4 3 1 2-4" stroke="#20b040" stroke-width="1.500" fill="none"/>
<circle cx="589" cy="769" r="2" fill="#444"/><circle cx="589" cy="775" r="2.500" fill="#555"/><circle cx="593" cy="777" r="1.500" fill="#777"/>
<rect x="604" y="768" width="8" height="11" fill="#eee" stroke="#111" stroke-width="1.200"/><rect x="606" y="771" width="3" height="3" fill="#111"/>
<path d="M622 769h9M622 773h10M622 777h8" stroke="#30a030" stroke-width="2"/><path d="M625 767v12" stroke="#c03030" stroke-width="2"/>
<path d="M1073 777l3-5 2 2 2-6" stroke="#20a020" stroke-width="2" fill="none"/><circle cx="1075" cy="777" r="1.500" fill="#222"/>
<use href="#srch" x="1095" y="773"/><path d="M1100 768h2M1100 778h2" stroke="#2040e0" stroke-width="1.500"/>
<use href="#srch" x="1114" y="773"/><use href="#srch" x="1131" y="773"/>
</g>

<!-- taskbar -->
<defs><linearGradient id="tb" x1="0" y1="0" x2="0" y2="1"><stop offset="0" stop-color="#aecde6"/><stop offset=".5" stop-color="#bcd6ea"/><stop offset="1" stop-color="#b2cfe6"/></linearGradient></defs>
<rect x="0" y="784" width="1142.500" height="26" fill="url(#tb)"/>
<rect x="0" y="783.500" width="1142.500" height="1" fill="#5c6c7c"/>
<rect x="0" y="785" width="34" height="25" fill="#7a94b0" opacity=".7"/>
<circle cx="17" cy="797" r="11" fill="#3a6a96"/><circle cx="17" cy="797" r="8" fill="#2f7fb8"/>
<rect x="12" y="791" width="4.500" height="5" fill="#e04a2a"/><rect x="17.500" y="791" width="4.500" height="5" fill="#6cbe30"/><rect x="12" y="797" width="4.500" height="5" fill="#2a90e0"/><rect x="17.500" y="797" width="4.500" height="5" fill="#f8c020"/>
<rect x="38" y="785" width="32" height="25" fill="#d4e4f0" stroke="#6e8296" stroke-width=".9"/>
<ellipse cx="54" cy="797" rx="9" ry="9" fill="none" stroke="#28a8e8" stroke-width="3"/><path d="M46 797h17" stroke="#28a8e8" stroke-width="2"/><path d="M44 806c6-1 16-10 20-18" stroke="#f0b820" stroke-width="1.600" fill="none"/>
<rect x="87" y="789" width="20" height="16" rx="1.500" fill="#f4d878"/><rect x="87" y="798" width="20" height="8" fill="#e8c060"/><rect x="90" y="790" width="14" height="4" fill="#4a90c0"/><rect x="92" y="800" width="10" height="4" fill="#60a8d8"/>
<rect x="127" y="789" width="16" height="16" fill="#98c4dc"/><circle cx="133" cy="797" r="5.500" fill="#f07820"/><path d="M131 794l4.500 3-4.500 3z" fill="#fff"/>
<path d="M168 806c6 0 12-4 16-8l-4 7c-3 2-8 2-12 1z" fill="#e8b020"/><path d="M176 791l8-3-3 10-6-1z" fill="#2040a0"/><circle cx="174" cy="793" r="3" fill="#d09060"/><rect x="172" y="796" width="5" height="6" fill="#503020"/>
<rect x="197" y="785" width="33" height="25" fill="#d4e4f0" stroke="#6e8296" stroke-width=".9"/><rect x="204" y="788" width="18" height="18" fill="#f4f6f8"/><rect x="203" y="789" width="11" height="16" fill="#2a4c96"/><text x="205" y="801" style="fill:#fff;font-weight:bold;font-size:10px">W</text>
<rect x="236" y="785" width="32" height="25" fill="#d4e4f0" stroke="#6e8296" stroke-width=".9"/><rect x="243" y="788" width="18" height="18" fill="#bcd8b8"/><rect x="242" y="789" width="11" height="16" fill="#1e7040"/><text x="245" y="801" style="fill:#fff;font-weight:bold;font-size:10px">X</text>
<rect x="275" y="785" width="32" height="25" fill="#d4e4f0" stroke="#6e8296" stroke-width=".9"/><rect x="282" y="788" width="11" height="17" fill="#0a60b8"/><text x="284" y="801" style="fill:#fff;font-weight:bold;font-size:10px">O</text><rect x="293" y="792" width="8" height="8" fill="#fff" stroke="#0a60b8"/><path d="M294 793l3 3 3-3" stroke="#0a60b8" fill="none"/>
<circle cx="333" cy="797" r="9.500" fill="#f4f8fc" stroke="#2a4a90" stroke-width="1.500"/><circle cx="331" cy="795" r="3" fill="#3a6ab0"/><path d="M325 802c3-3 9-3 13 0z" fill="#3a6ab0"/><path d="M337 792h4M339 790v4" stroke="#3a6ab0"/>
<rect x="355" y="785" width="33" height="25" fill="#d4e4f0" stroke="#6e8296" stroke-width=".9"/><circle cx="372" cy="797" r="9.500" fill="#18a8e8"/><text x="368" y="802" style="fill:#fff;font-weight:bold;font-size:13px">S</text>
<rect x="394" y="785" width="33" height="25" fill="#d4e4f0" stroke="#6e8296" stroke-width=".9"/><rect x="401" y="788" width="18" height="18" fill="#b81818"/><path d="M404 803c4-3 6-8 5-12 2 5 4 7 8 8-4 0-8 1-13 4z" fill="none" stroke="#fff" stroke-width="1.200"/>
<rect x="433" y="785" width="32" height="25" fill="#d4e4f0" stroke="#6e8296" stroke-width=".9"/><rect x="441" y="794" width="6" height="9" fill="#f07070" stroke="#c05050" stroke-width=".5"/><path d="M444 791v15" stroke="#c05050"/><rect x="451" y="791" width="6" height="11" fill="#50d850" stroke="#30a030" stroke-width=".5"/><path d="M454 788v17" stroke="#30a030"/>
<rect x="473" y="785" width="34" height="25" fill="#d4e4f0" stroke="#6e8296" stroke-width=".9"/><rect x="480" y="787" width="20" height="21" fill="#2a88c0"/><path d="M486 791h-2v13h2M494 791h2v13h-2" stroke="#fff" stroke-width="1.400" fill="none"/><path d="M489 793l3 4-3 5" stroke="#fff" fill="none"/>
<rect x="605" y="790" width="60" height="5" fill="#98b4cc" opacity=".5"/><rect x="610" y="802" width="40" height="5" fill="#9ab0c8" opacity=".5"/>
<rect x="705" y="790" width="90" height="5" fill="#98b4cc" opacity=".5"/><rect x="705" y="802" width="65" height="5" fill="#9ab0c8" opacity=".5"/>
<circle cx="850" cy="797" r="3" fill="#98b0cc" opacity=".6"/><circle cx="950" cy="797" r="3" fill="#98b0cc" opacity=".6"/><circle cx="1000" cy="797" r="3" fill="#98b0cc" opacity=".6"/>
<text x="1086" y="798" style="fill:#8a98a8">FR</text>
<path d="M1104 797l3-3 3 3" stroke="#5a6a7a" fill="none"/>
<rect x="1118" y="792" width="7" height="10" fill="#50606e"/><rect x="1131" y="790" width="9" height="11" fill="#404e5c"/>
<rect x="1115" y="785" width="27" height="3" fill="#7a8a98"/>
</svg>
</body></html>
